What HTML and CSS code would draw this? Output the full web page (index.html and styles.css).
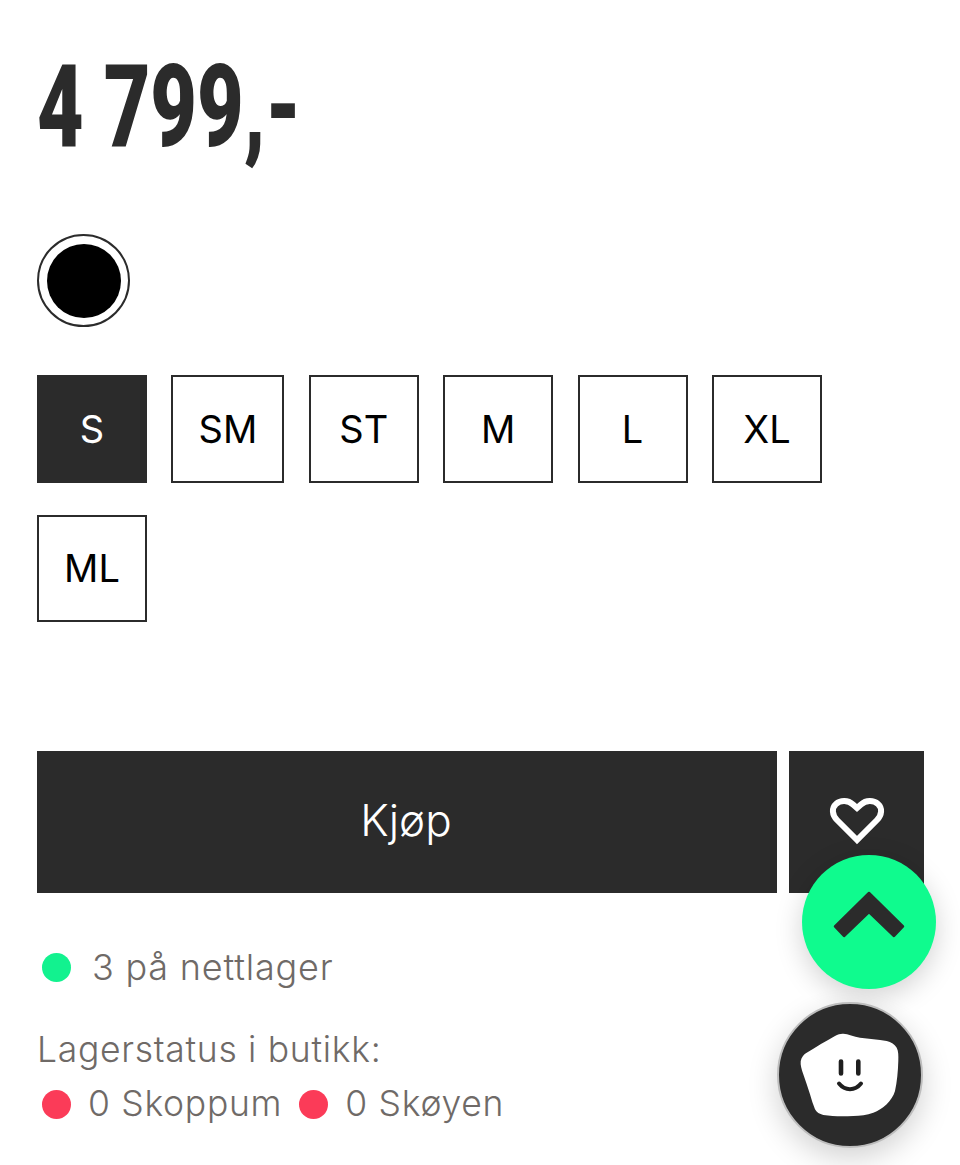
FILE: index.html
```html
<!DOCTYPE html>
<html lang="en">
<head>
    <meta charset="UTF-8">
    <meta name="viewport" content="width=device-width, initial-scale=1.0">
    <title>Produkt</title>
    <link rel="stylesheet" href="styles.css">
</head>
<body>
    <div class="product">
        <h1 class="price"><span class="price-text">4 799,-</span></h1>

        <div class="swatch"><span class="swatch-fill"></span></div>

        <div class="sizes">
            <button class="size active">S</button>
            <button class="size wide">SM</button>
            <button class="size">ST</button>
            <button class="size">M</button>
            <button class="size">L</button>
            <button class="size">XL</button>
            <button class="size">ML</button>
        </div>

        <div class="actions">
            <button class="buy"><span class="buy-label">Kjøp</span></button>
            <button class="wish">
                <svg class="heart" width="56" height="50" viewBox="0 0 56 50">
                    <path d="M28 43 L8 23 C3 18 2.5 11 7 7 C11.5 3 19 3 24 7.5 L28 11 L32 7.5 C37 3 44.5 3 49 7 C53.5 11 53 18 48 23 Z" fill="none" stroke="#fff" stroke-width="6" stroke-linejoin="miter"/>
                </svg>
            </button>
        </div>

        <div class="online"><span class="dot green"></span>3 på nettlager</div>

        <div class="stores">
            <div class="stores-title">Lagerstatus i butikk:</div>
            <div class="stores-row">
                <span class="store"><span class="dot red"></span>0 Skoppum</span>
                <span class="store"><span class="dot red"></span>0 Skøyen</span>
            </div>
        </div>
    </div>

    <button class="to-top">
        <svg width="72" height="48" viewBox="0 0 72 48">
            <path d="M36 2 L70 35.5 L61 45 L36 21 L11 45 L2 35.5 Z" fill="#2b2b2b" stroke="#2b2b2b" stroke-width="2.5" stroke-linejoin="round"/>
        </svg>
    </button>

    <button class="chat">
        <svg width="100" height="84" viewBox="0 0 100 84">
            <path d="M0.7 28 C1.5 24 4 21 6.7 19.7 C16 14 26 8 35 3 C38 1.2 41 0.5 43.3 0.7 C48 1 54 3.5 60 4.7 C69 6 78 6.5 86.7 8 C91 9 95 11.5 96.7 14.7 C98.5 18 98.5 23 98.3 28 C98 38 97 49 95 58 C93.5 63 90.5 67.5 86.7 71.3 C82.5 75 78 78 73.3 79.7 C67 82 60 82.8 53.3 83 C43 83.5 33 83.5 23.3 82 C19.5 81 16.5 79.5 15 76.3 C13 71.5 11.5 66.5 10 61.3 C8 54.5 5.5 48 3.3 41.3 C1.8 37 0.2 32 0.7 28 Z" fill="#fff"/>
            <path d="M41 28.5 V40.5 M58.3 28.5 V40.5" stroke="#1f1f1f" stroke-width="4.6" stroke-linecap="round" fill="none"/>
            <path d="M39 50.5 C45 58 55 58 61 50.5" stroke="#1f1f1f" stroke-width="4" stroke-linecap="round" fill="none"/>
        </svg>
    </button>
</body>
</html>
```

FILE: styles.css
```css
html, body{
    margin: 0;
    padding: 0;
    height: 1165px;
    overflow: hidden;
    background-color: #fff;
}
body{
    font-family: Inter, "Liberation Sans", sans-serif;
    color: #2b2b2b;
}
button{
    font-family: inherit;
    cursor: pointer;
    padding: 0;
}
.product{
    padding: 0 36px 0 37px;
}
.price{
    margin: 0;
    padding-top: 41px;
    height: 168px;
    box-sizing: border-box;
    font-family: Roboto, "Liberation Sans", sans-serif;
    font-size: 115px;
    line-height: 132px;
    font-weight: 900;
    color: #2b2b2b;
    white-space: nowrap;
    margin-bottom: 66px;
}
.price-text{
    display: inline-block;
    transform: scaleX(0.7);
    transform-origin: left center;
}
.swatch{
    width: 93px;
    height: 93px;
    box-sizing: border-box;
    border: 2px solid #2b2b2b;
    border-radius: 50%;
    display: flex;
    align-items: center;
    justify-content: center;
}
.swatch-fill{
    width: 74px;
    height: 74px;
    border-radius: 50%;
    background-color: #000;
}
.sizes{
    display: flex;
    flex-wrap: wrap;
    gap: 32px 24.4px;
    margin-top: 48px;
}
.size{
    width: 110px;
    height: 107.5px;
    box-sizing: border-box;
    border: 2px solid #2b2b2b;
    background-color: #fff;
    color: #000;
    font-size: 38px;
}
.size.wide{
    width: 113px;
}
.size.active{
    background-color: #2b2b2b;
    color: #fff;
}
.actions{
    display: flex;
    gap: 12px;
    margin-top: 129px;
}
.buy{
    width: 740px;
    height: 142px;
    border: none;
    background-color: #2b2b2b;
    color: #fff;
    font-size: 44px;
    font-weight: 300;
    padding-bottom: 4px;
    padding-right: 2px;
}
.wish{
    width: 135px;
    height: 142px;
    border: none;
    background-color: #2b2b2b;
    display: flex;
    justify-content: center;
    padding-top: 46px;
}
.online{
    display: flex;
    align-items: center;
    margin-top: 52px;
    font-size: 36px;
    line-height: 44px;
    font-weight: 300;
    color: #6f6a67;
    letter-spacing: 0.8px;
}
.online .dot{
    margin: 0 21px 0 5px;
}
.dot{
    display: inline-block;
    width: 29px;
    height: 29px;
    border-radius: 50%;
    flex: none;
}
.green{
    background-color: #12f28f;
}
.red{
    background-color: #fb3b58;
}
.stores{
    margin-top: 34px;
    font-size: 35.5px;
    line-height: 54px;
    font-weight: 300;
    color: #6f6a67;
    letter-spacing: 0.7px;
}
.stores-row{
    display: flex;
    gap: 12px;
}
.store{
    display: flex;
    align-items: center;
}
.store .dot{
    margin: 0 17px 0 5px;
}
.to-top{
    position: fixed;
    left: 802px;
    top: 855px;
    width: 134px;
    height: 134px;
    border: none;
    border-radius: 50%;
    background-color: #0ffb8e;
    box-shadow: 0 8px 28px rgba(0, 0, 0, 0.18);
    display: flex;
    align-items: center;
    justify-content: center;
    padding-bottom: 14px;
}
.chat{
    position: fixed;
    left: 777px;
    top: 1002px;
    width: 146px;
    height: 146px;
    box-sizing: border-box;
    border: 2px solid #bdbdbd;
    border-radius: 50%;
    background-color: #2b2b2b;
    box-shadow: 0 10px 30px rgba(0, 0, 0, 0.18);
    display: flex;
    align-items: center;
    justify-content: center;
}
```
